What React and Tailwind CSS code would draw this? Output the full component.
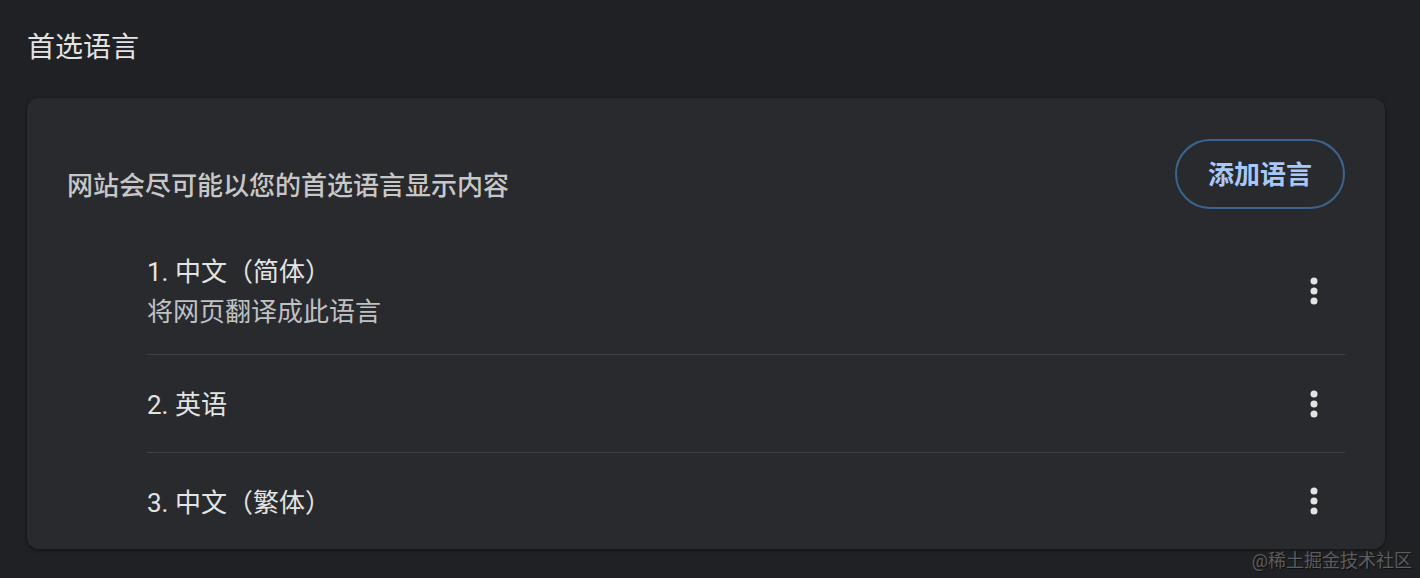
import React from 'react';

const FONT = 'font-["Roboto","Noto_Sans_CJK_SC",sans-serif]';

const languages = [
    { id: 1, name: '1. 中文（简体）', note: '将网页翻译成此语言' },
    { id: 2, name: '2. 英语' },
    { id: 3, name: '3. 中文（繁体）' },
];

const MoreIcon = () => (
    <svg width="40" height="40" viewBox="0 0 40 40" className="text-[#e3e3e3]">
        <circle cx="20" cy="10" r="3.5" fill="currentColor" />
        <circle cx="20" cy="20" r="3.5" fill="currentColor" />
        <circle cx="20" cy="30" r="3.5" fill="currentColor" />
    </svg>
);

const LanguageRow = ({ lang, index }) => {
    const first = index === 0;
    const last = index === languages.length - 1;
    return (
        <div
            className={`flex items-center justify-between ${first ? 'pt-[44px] pb-[22px]' : 'border-t border-[#3f4043]'} ${!first && !last ? 'h-[98px]' : ''} ${last ? 'h-[97px]' : ''}`}
        >
            <div className={`flex flex-col text-[26px] leading-[39px] ${first ? '' : 'pt-[4px]'}`}>
                <span className="text-[#e3e3e3]">{lang.name}</span>
                {lang.note && <span className="mt-[1px] text-[#bfc1c4]">{lang.note}</span>}
            </div>
            <button className={`mr-[11px] flex items-center justify-center ${first ? '-mt-[4px]' : ''}`}>
                <MoreIcon />
            </button>
        </div>
    );
};

export default function App() {
    return (
        <div className={`relative h-[578px] w-full overflow-hidden bg-[#202124] ${FONT}`}>
            <h1 className="pl-[27px] pt-[28px] text-[28px] leading-[40px] text-[#e3e3e3]">
                首选语言
            </h1>

            <div className="ml-[27px] mt-[30px] w-[1358px] rounded-[12px] bg-[#292a2d] px-[40px] pt-[41px] shadow-[0_1px_4px_rgba(0,0,0,0.45)]">
                <div className="flex items-start justify-between">
                    <p className="pt-[28px] text-[26px] font-medium leading-[39px] text-[#c7c7c7]">
                        网站会尽可能以您的首选语言显示内容
                    </p>
                    <button className="flex h-[70px] w-[170px] items-center justify-center rounded-full border-2 border-[#3b6590] pt-[2px] text-[26px] font-bold text-[#a8c7fa]">
                        添加语言
                    </button>
                </div>

                <div className="pl-[80px]">
                    {languages.map((lang, i) => (
                        <LanguageRow key={lang.id} lang={lang} index={i} />
                    ))}
                </div>
            </div>

            <div className="absolute bottom-[5px] right-[8px] text-[18px] leading-[24px] text-[#5c5d60] [text-shadow:1px_1px_1px_rgba(0,0,0,0.6)]">
                @稀土掘金技术社区
            </div>
        </div>
    );
}
